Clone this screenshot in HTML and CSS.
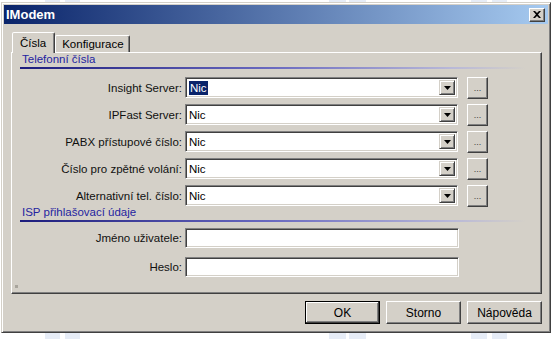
FILE: index.html
```html
<!DOCTYPE html>
<html lang="cs">
<head>
  <meta charset="UTF-8" />
  <title>IModem</title>
  <link rel="stylesheet" href="styles.css">
</head>
<body>
  <div class="window">
    <div class="titlebar">
      <span class="title">IModem</span>
      <button class="close-btn" title="Zavřít">
        <svg width="8" height="7" viewBox="0 0 8 7"><path d="M0 0h2l2 2 2-2h2L5 3.5 8 7H6L4 5 2 7H0l3-3.5z" fill="#000"/></svg>
      </button>
    </div>

    <div class="tabs">
      <div class="tab active">Čísla</div>
      <div class="tab">Konfigurace</div>
    </div>

    <div class="panel">
      <div class="section-title">Telefonní čísla</div>
      <div class="form">
        <label>Insight Server:</label>
        <div class="combo"><span class="value"><span class="selected">Nic</span></span><span class="drop"><svg width="7" height="4" viewBox="0 0 7 4"><path d="M0 0h7L3.5 4z" fill="#000"/></svg></span></div>
        <button class="dots">...</button>

        <label>IPFast Server:</label>
        <div class="combo"><span class="value">Nic</span><span class="drop"><svg width="7" height="4" viewBox="0 0 7 4"><path d="M0 0h7L3.5 4z" fill="#000"/></svg></span></div>
        <button class="dots">...</button>

        <label>PABX přístupové číslo:</label>
        <div class="combo"><span class="value">Nic</span><span class="drop"><svg width="7" height="4" viewBox="0 0 7 4"><path d="M0 0h7L3.5 4z" fill="#000"/></svg></span></div>
        <button class="dots">...</button>

        <label>Číslo pro zpětné volání:</label>
        <div class="combo"><span class="value">Nic</span><span class="drop"><svg width="7" height="4" viewBox="0 0 7 4"><path d="M0 0h7L3.5 4z" fill="#000"/></svg></span></div>
        <button class="dots">...</button>

        <label>Alternativní tel. číslo:</label>
        <div class="combo"><span class="value">Nic</span><span class="drop"><svg width="7" height="4" viewBox="0 0 7 4"><path d="M0 0h7L3.5 4z" fill="#000"/></svg></span></div>
        <button class="dots">...</button>
      </div>

      <div class="section-title isp">ISP přihlašovací údaje</div>
      <div class="form login">
        <label>Jméno uživatele:</label>
        <input type="text" class="field" />

        <label>Heslo:</label>
        <input type="password" class="field" />
      </div>
      <span class="grip"></span>
    </div>

    <div class="buttons">
      <button class="btn default">OK</button>
      <button class="btn">Storno</button>
      <button class="btn">Nápověda</button>
    </div>
  </div>
</body>
</html>
```

FILE: styles.css
```css
*, *::before, *::after {
  box-sizing: border-box;
}

html, body {
  height: 100%;
}

body {
  margin: 0;
  /* pozadí plochy – světlé sloupce pod oknem */
  background:
    linear-gradient(#e6ecf6, #e6ecf6) 45px 0 / 15px 100% no-repeat,
    linear-gradient(#e6ecf6, #e6ecf6) 65px 0 / 15px 100% no-repeat,
    linear-gradient(#e6ecf6, #e6ecf6) 329px 0 / 17px 100% no-repeat,
    linear-gradient(#e6ecf6, #e6ecf6) 349px 0 / 17px 100% no-repeat,
    linear-gradient(#e6ecf6, #e6ecf6) 471px 0 / 16px 100% no-repeat,
    linear-gradient(#e6ecf6, #e6ecf6) 492px 0 / 15px 100% no-repeat,
    #fff;
  font-family: 'Liberation Sans', Arial, sans-serif;
  font-size: 11px;
  color: #000;
}

/* Okno */
.window {
  margin: 2px 0 0 1px;
  width: 550px;
  height: 331px;
  background: #d4d0c8;
  border: 1px solid;
  border-color: #d4d0c8 #404040 #404040 #d4d0c8;
  box-shadow: inset 1px 1px #fff, inset -1px -1px #808080;
  padding: 2px;
}

.titlebar {
  height: 19px;
  display: flex;
  align-items: center;
  justify-content: space-between;
  padding: 0 3px 0 2px;
  background: linear-gradient(90deg, #0a246a, #a6caf0);
}

.title {
  color: #fff;
  font-weight: bold;
  font-size: 13px;
}

.close-btn {
  width: 16px;
  height: 14px;
  padding: 0;
  display: flex;
  align-items: center;
  justify-content: center;
  background: #d4d0c8;
  border: 1px solid;
  border-color: #fff #404040 #404040 #fff;
  box-shadow: inset -1px -1px #808080;
}

/* Záložky */
.tabs {
  display: flex;
  align-items: flex-end;
  height: 20px;
  margin: 8px 0 0 8px;
}

.tab {
  height: 17px;
  padding: 1px 5px 0 6px;
  line-height: 15px;
  font-size: 11.5px;
  border: 1px solid;
  border-bottom: none;
  border-color: #fff #404040 transparent #fff;
  box-shadow: inset -1px 0 #808080;
  border-radius: 2px 2px 0 0;
}

.tab.active {
  position: relative;
  z-index: 1;
  height: 21px;
  margin-bottom: -1px;
  padding: 3px 8px 0 7px;
  background: #d4d0c8;
}

.panel {
  position: relative;
  height: 242px;
  margin: 0 6px 0 7px;
  border: 1px solid;
  border-color: #fff #404040 #404040 #fff;
  box-shadow: inset -1px -1px #808080;
}

.section-title {
  margin-left: 8px;
  width: 505px;
  padding: 0 0 1px 2px;
  height: 16px;
  line-height: 12px;
  font-size: 11.5px;
  color: #2424a0;
  border-bottom: 2px solid;
  border-image: linear-gradient(90deg, #1c1c7c 0%, #6a6ac0 50%, #b8b8d8 85%, #d4d0c8 100%) 1;
}

/* Formulář */
.form {
  display: grid;
  grid-template-columns: 170px 273px 21px;
  grid-auto-rows: 21px;
  column-gap: 3px;
  row-gap: 6px;
  align-items: center;
  margin-top: 8px;
}

.form label {
  text-align: right;
  font-size: 11.5px;
  color: #101010;
}

.form .dots {
  margin-left: 6px;
}

.form.login {
  grid-template-columns: 170px 274px;
  grid-auto-rows: 20px;
  row-gap: 9px;
  margin-top: 6px;
}

.section-title.isp {
  margin-top: 0;
}

.combo,
.field {
  height: 21px;
  background: #fff;
  border: 1px solid;
  border-color: #808080 #fff #fff #808080;
  box-shadow: inset 1px 1px #404040, inset -1px -1px #d4d0c8;
}

.combo {
  display: flex;
  align-items: stretch;
  padding: 2px;
}

.combo .value {
  flex: 1;
  padding-left: 1px;
  line-height: 17px;
  font-size: 11.5px;
}

.selected {
  background: #0a246a;
  color: #fff;
  padding: 1px 1px;
}

.drop {
  width: 16px;
  display: flex;
  align-items: center;
  justify-content: center;
  background: #d4d0c8;
  border: 1px solid;
  border-color: #d4d0c8 #404040 #404040 #d4d0c8;
  box-shadow: inset 1px 1px #fff, inset -1px -1px #808080;
}

.field {
  width: 274px;
  height: 20px;
  padding: 0 3px;
  font: inherit;
  outline: none;
}

.dots,
.btn {
  background: #d4d0c8;
  border: 1px solid;
  border-color: #fff #404040 #404040 #fff;
  box-shadow: inset -1px -1px #808080;
  font-family: inherit;
  color: #000;
  padding: 0;
}

.dots {
  width: 21px;
  height: 22px;
  font-size: 9px;
  color: #404040;
  line-height: 18px;
}

.grip {
  position: absolute;
  left: 3px;
  bottom: 5px;
  width: 3px;
  height: 3px;
  background: #a8a49c;
}

/* Tlačítka */
.buttons {
  display: flex;
  justify-content: flex-end;
  gap: 6px;
  margin: 7px 6px 0 0;
}

.btn {
  width: 75px;
  height: 23px;
  font-size: 12px;
}

.btn.default {
  outline: 1px solid #000;
  outline-offset: -1px;
  box-shadow: inset -1px -1px #404040, inset 1px 1px #fff, inset -2px -2px #808080;
}
```
